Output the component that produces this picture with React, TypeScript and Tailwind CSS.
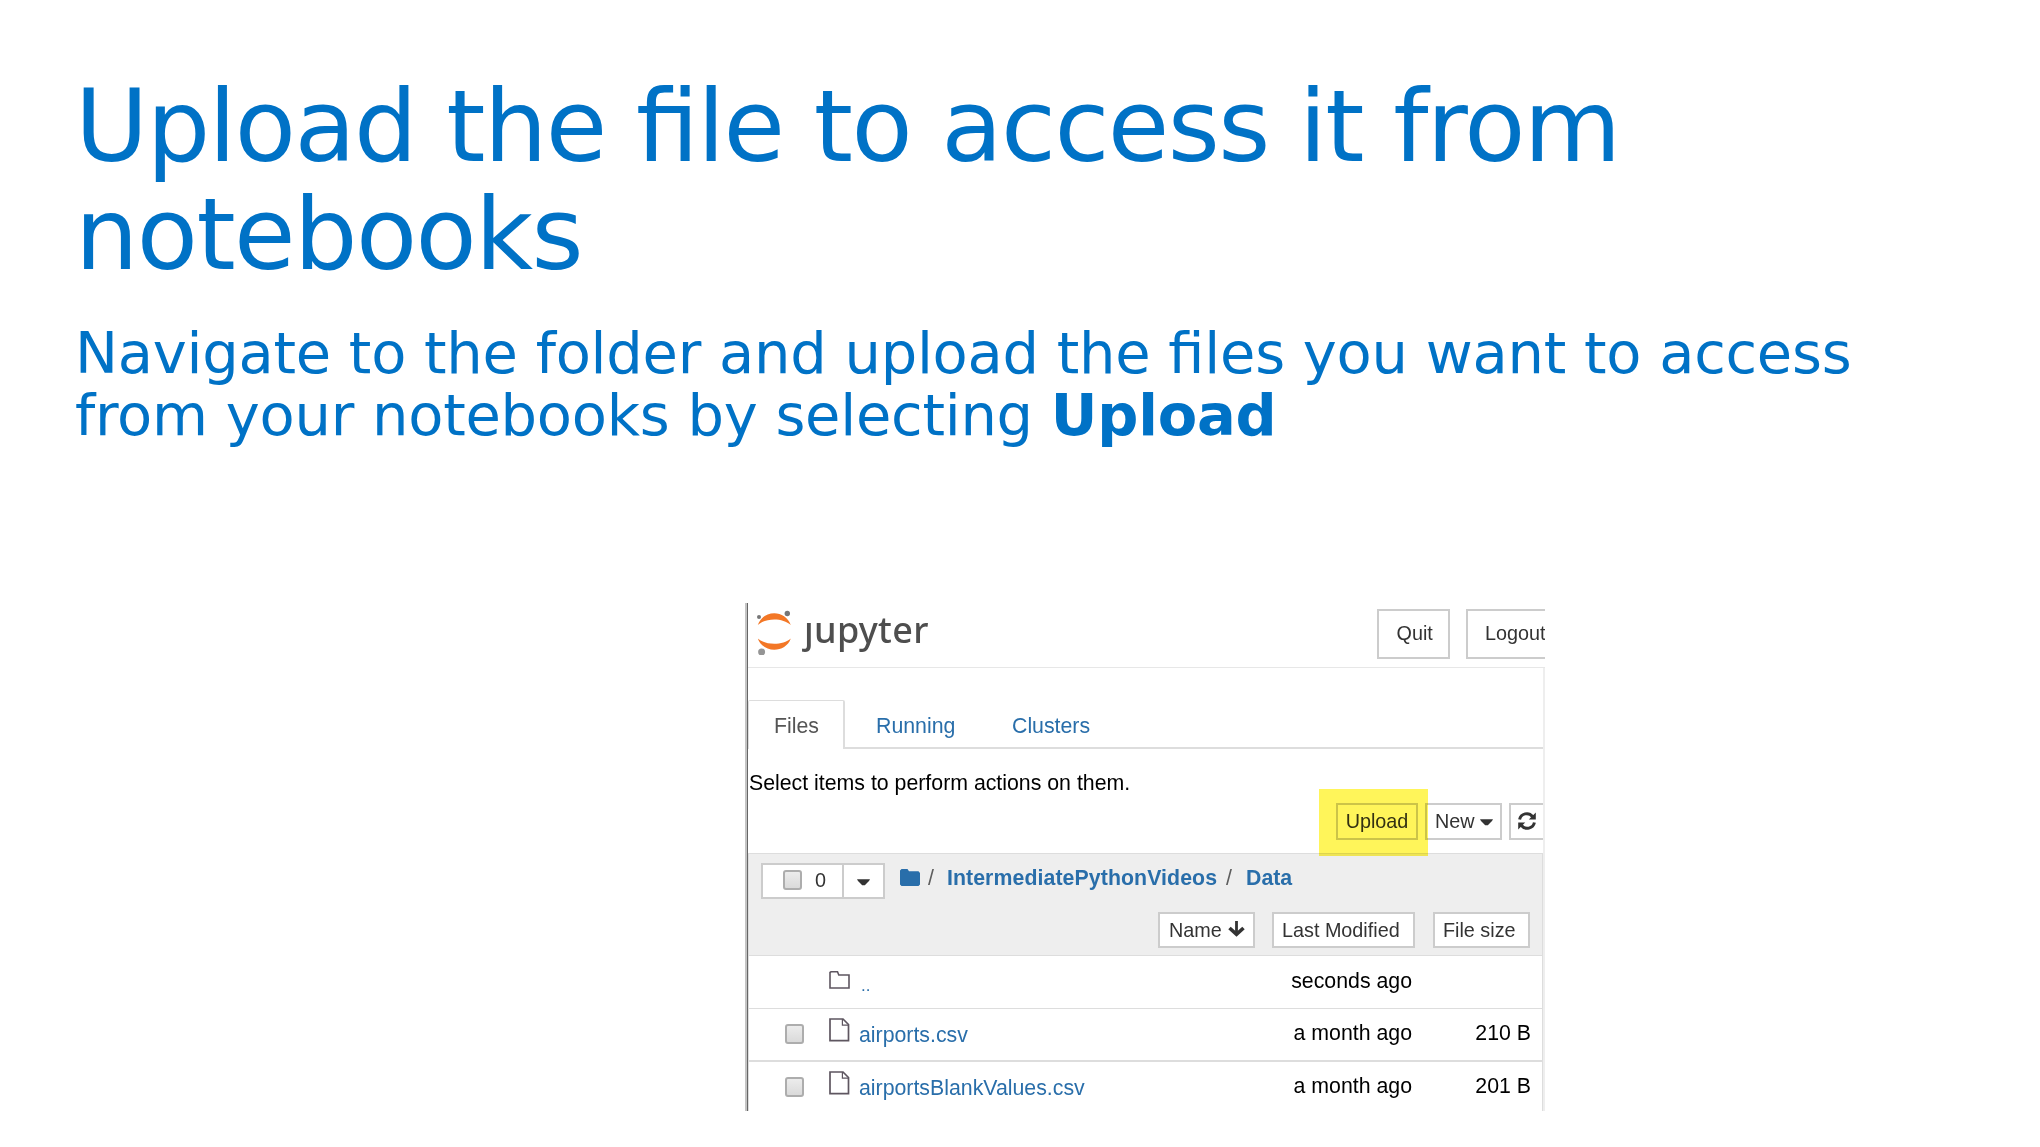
import React from "react";

const Caret = ({ className = "" }: { className?: string }) => (
  <svg className={className} width="13" height="7" viewBox="0 0 13 7">
    <path d="M0 0.3H13L12 2L7.8 6.2H5.2L1 2Z" fill="#333" />
  </svg>
);

const Checkbox = ({ className = "" }: { className?: string }) => (
  <span
    className={`block h-[20px] w-[19px] shrink-0 rounded-[3px] border-2 border-[#adadad] bg-gradient-to-b from-[#ececec] to-[#dadada] ${className}`}
  />
);

const FolderOpen = () => (
  <svg width="21" height="18" viewBox="0 0 21 18" fill="none">
    <path d="M1 17V1.5L2 0.8H8.5L9.8 4H20V17Z" stroke="#5e5660" strokeWidth="1.6" />
  </svg>
);

const FileIcon = () => (
  <svg width="21" height="24" viewBox="0 0 21 24" fill="none">
    <path d="M1 1H14L19.5 6.5V22.6H1Z" stroke="#5e5660" strokeWidth="1.7" />
    <path d="M13.4 1V7.2H19.5" stroke="#5e5660" strokeWidth="1.2" />
  </svg>
);

const JupyterMark = () => (
  <svg width="36" height="48" viewBox="0 0 36 48">
    <path d="M0.8 18C6 2.2 28.500 2.200 33.800 18C26 10.500 8.500 10.500 0.800 18Z" fill="#f37726" />
    <path d="M0.8 31.500C6 46.500 28.500 46.500 33.800 31.500C26 38.500 8.500 38.500 0.800 31.500Z" fill="#f37726" />
    <circle cx="2" cy="10" r="2" fill="#767677" />
    <circle cx="30.3" cy="6.5" r="2.7" fill="#767677" />
    <circle cx="4.6" cy="45" r="3.5" fill="#959595" />
  </svg>
);

type Row = { name: string; modified: string; size?: string };
const files: Row[] = [
  { name: "airports.csv", modified: "a month ago", size: "210 B" },
  { name: "airportsBlankValues.csv", modified: "a month ago", size: "201 B" },
];

function Notebook() {
  return (
    <section className="ml-[745px] flex h-[508px] w-[800px] overflow-hidden whitespace-nowrap border-l-2 border-[#c4c4c4] font-['Liberation_Sans',sans-serif] text-[21.3px] text-black">
      <div className="flex w-[798px] shrink-0 flex-col border-l border-[#666]">
        <header className="flex h-[65px] shrink-0 border-b border-[#e7e7e7]">
          <div className="ml-[9px] mt-[4px]">
            <JupyterMark />
          </div>
          <div className="ml-[11px] mt-[3px] font-['Noto_Sans',sans-serif] text-[36px] font-medium leading-[48px] tracking-[0.3px] text-[#4e4e4e]">ȷupyter</div>
          <div className="ml-auto mr-[-40px] mt-[6px] flex gap-[16px] text-[19.8px] leading-[44px] text-[#333]">
            <div className="h-[50px] w-[73px] border-2 border-[#ccc] pl-[17.500px]">Quit</div>
            <div className="h-[50px] w-[119px] border-2 border-[#ccc] pl-[17px]">Logout</div>
          </div>
        </header>

        <div className="flex min-h-0 flex-1 flex-col border-r-2 border-[#eee]">
          <nav className="mt-[32px] flex h-[49px] shrink-0 leading-[48px] text-[#296eaa]">
            <div className="w-[97px] rounded-t-[2px] border-l border-r-2 border-t border-[#ddd] pl-[25px] pt-[1px] text-[#555]">Files</div>
            <div className="flex flex-1 border-b-2 border-[#ddd] pt-[2px]">
              <span className="ml-[31px] w-[136px]">Running</span>
              <span>Clusters</span>
            </div>
          </nav>

          <div className="ml-px mt-[22px] h-[24px] shrink-0 leading-[24px]">Select items to perform actions on them.</div>

          <div className="mt-[8px] flex h-[37px] shrink-0 gap-[7px] overflow-visible text-[19.8px] leading-[33px] text-[#333]">
            <div className="relative ml-[588px] w-[82px] shrink-0 border-2 border-[#ccc] text-center">
              Upload
              <span className="absolute left-[-19px] top-[-16px] z-10 h-[67px] w-[109px] bg-[#fff55a] mix-blend-multiply" />
            </div>
            <div className="flex w-[77px] shrink-0 items-center border-2 border-[#ccc] pl-[8px]">
              New
              <Caret className="ml-[5px] mt-[2px]" />
            </div>
            <div className="w-[34px] shrink-0 border-2 border-r-0 border-[#ccc] pl-[6px] pt-[6px]">
              <svg width="20" height="20" viewBox="0 0 20 20" fill="none" stroke="#333" strokeWidth="3">
                <path d="M2.6 8.5A7.3 7.3 0 0 1 15.5 5.5" />
                <path d="M17.4 11.5A7.3 7.3 0 0 1 4.5 14.5" />
                <path d="M18.8 1.5V8.5H11.8Z M1.2 18.5V11.5H8.2Z" fill="#333" stroke="none" />
              </svg>
            </div>
          </div>

          <div className="mt-[13px] flex flex-1 flex-col border-l border-r border-t border-[#ddd]">
            <div className="flex h-[102px] shrink-0 flex-col border-b border-[#ddd] bg-[#eee]">
              <div className="ml-[12px] mt-[9px] flex h-[36px] font-bold leading-[24px] text-[#296eaa]">
                <div className="flex w-[124px] border-2 border-[#ccc] bg-white font-normal text-[#333]">
                  <div className="flex w-[81px] items-center border-r-2 border-[#ccc] pb-[2px] pl-[20px] text-[19.8px]">
                    <Checkbox />
                    <span className="ml-[13px]">0</span>
                  </div>
                  <div className="flex flex-1 items-center justify-center pt-[3px]">
                    <Caret />
                  </div>
                </div>
                <svg className="ml-[15px] mt-[6px]" width="20" height="17" viewBox="0 0 20 17">
                  <path d="M0 1.5L1.5 0H7.5L9 2.3H18.5L20 4V15.5L18.5 17H1.5L0 15.5Z" fill="#296eaa" />
                </svg>
                <span className="ml-[8px] mt-[3px] font-normal text-[#5e5e5e]">/</span>
                <span className="ml-[13px] mt-[3px] tracking-[0.08px]">IntermediatePythonVideos</span>
                <span className="ml-[9px] mt-[3px] font-normal text-[#5e5e5e]">/</span>
                <span className="ml-[14px] mt-[3px]">Data</span>
              </div>
              <div className="mr-[12px] mt-[13px] flex h-[36px] justify-end text-[19.8px] leading-[32px] text-[#333]">
                <div className="mr-[17px] flex w-[97px] border-2 border-[#ccc] bg-white pl-[9px]">
                  Name
                  <svg className="ml-[6px] mt-[7px]" width="17" height="17" viewBox="0 0 17 17" fill="none" stroke="#333">
                    <path d="M8.5 0V13" strokeWidth="2.8" />
                    <path d="M1.5 7L8.500 13.400L15.500 7" strokeWidth="3.600" />
                  </svg>
                </div>
                <div className="mr-[18px] w-[143px] border-2 border-[#ccc] bg-white pl-[8px]">Last Modified</div>
                <div className="w-[97px] border-2 border-[#ccc] bg-white pl-[8px]">File size</div>
              </div>
            </div>

            <div className="flex h-[53px] shrink-0 border-b border-[#ddd]">
              <div className="ml-[80px] mt-[15px]"><FolderOpen /></div>
              <span className="ml-[11px] mt-[18px] text-[17px] leading-[24px] text-[#296eaa]">..</span>
              <span className="ml-auto mr-[130px] mt-[13px] leading-[24px]">seconds ago</span>
            </div>
            {files.map((f) => (
              <div key={f.name} className="flex h-[53px] shrink-0 border-b-2 border-[#ddd]">
                <Checkbox className="ml-[36px] mt-[15px]" />
                <div className="ml-[25px] mt-[9px]"><FileIcon /></div>
                <span className="ml-[9px] mt-[14px] leading-[24px] text-[#296eaa]">{f.name}</span>
                <span className="ml-auto mt-[12px] leading-[24px]">{f.modified}</span>
                <span className="mr-[11px] mt-[12px] w-[119px] text-right leading-[24px]">{f.size}</span>
              </div>
            ))}
          </div>
        </div>
      </div>
    </section>
  );
}

export default function App() {
  return (
    <main className="flex h-[1147px] w-[2040px] flex-col overflow-hidden bg-white font-['DejaVu_Sans',sans-serif] text-[#0072c6]">
      <h1 className="ml-[75px] mt-[73px] h-[216px] whitespace-nowrap text-[100px] leading-[108px] tracking-[-1.56px] [font-feature-settings:'liga'_1]">
        Upload the file to access it from
        <br />
        notebooks
      </h1>
      <p className="ml-[75px] mt-[34px] h-[124px] whitespace-nowrap text-[57.5px] leading-[62px] tracking-[-0.26px] [font-feature-settings:'liga'_1]">
        Navigate to the folder and upload the files you want to access
        <br />
        from your notebooks by selecting <b>Upload</b>
      </p>
      <div className="mt-[156px]">
        <Notebook />
      </div>
    </main>
  );
}
